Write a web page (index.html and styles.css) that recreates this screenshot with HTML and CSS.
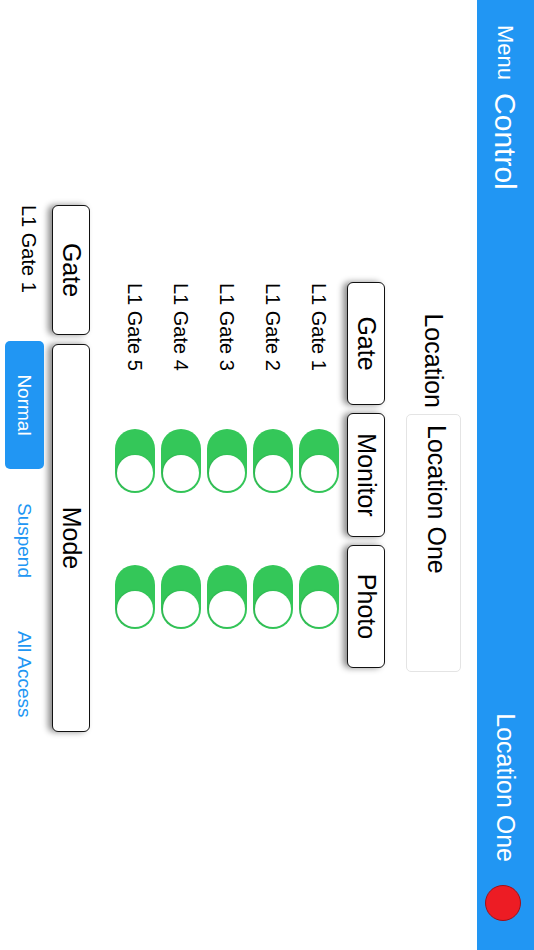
FILE: index.html
```html
<!DOCTYPE html>
<html>
<head>
<meta charset="utf-8">
<link rel="stylesheet" href="styles.css">
</head>
<body>
<div class="viewport">
<div class="stage">
  <header class="topbar">
    <div class="bar-left">
      <span class="menu">Menu</span>
      <span class="title">Control</span>
    </div>
    <div class="bar-right">
      <span class="loc">Location One</span>
      <span class="status-dot"></span>
    </div>
  </header>

  <section class="form">
    <div class="loc-row">
      <label class="loc-label">Location</label>
      <div class="loc-input">Location One</div>
    </div>
    <div class="btn-row">
      <div class="btn btn-gate">Gate</div>
      <div class="btn btn-mon">Monitor</div>
      <div class="btn btn-photo">Photo</div>
    </div>
    <div class="gates">
      <div class="gate-row"><span class="gname">L1 Gate 1</span><span class="toggle"><i></i></span><span class="toggle t2"><i></i></span></div>
      <div class="gate-row"><span class="gname">L1 Gate 2</span><span class="toggle"><i></i></span><span class="toggle t2"><i></i></span></div>
      <div class="gate-row"><span class="gname">L1 Gate 3</span><span class="toggle"><i></i></span><span class="toggle t2"><i></i></span></div>
      <div class="gate-row"><span class="gname">L1 Gate 4</span><span class="toggle"><i></i></span><span class="toggle t2"><i></i></span></div>
      <div class="gate-row"><span class="gname">L1 Gate 5</span><span class="toggle"><i></i></span><span class="toggle t2"><i></i></span></div>
    </div>
  </section>

  <section class="mode">
    <div class="mode-head">
      <div class="btn btn-gate2">Gate</div>
      <div class="btn btn-mode">Mode</div>
    </div>
    <div class="mode-row">
      <span class="mname">L1 Gate 1</span>
      <span class="seg seg-on">Normal</span>
      <span class="seg seg-susp">Suspend</span>
      <span class="seg seg-all">All Access</span>
    </div>
  </section>
</div>
</div>
</body>
</html>
```

FILE: styles.css
```css
html, body {
  margin: 0;
  padding: 0;
  background: #ffffff;
  overflow: hidden;
}
.viewport {
  width: 534px;
  height: 950px;
  overflow: hidden;
  position: relative;
}
.stage {
  position: absolute;
  left: 0;
  top: 0;
  width: 950px;
  height: 534px;
  transform-origin: 0 0;
  transform: translateX(534px) rotate(90deg);
  font-family: "Liberation Sans", Arial, Helvetica, sans-serif;
  color: #000;
  background: #fff;
}
.topbar {
  height: 57px;
  background: #2196f3;
  color: #fff;
  display: flex;
  align-items: center;
  justify-content: space-between;
  padding: 0 29px 0 25px;
  box-sizing: border-box;
}
.bar-left {
  display: flex;
  align-items: center;
  gap: 13px;
}
.menu {
  font-size: 22px;
  line-height: 1;
}
.title {
  font-size: 30px;
  line-height: 1;
}
.bar-right {
  display: flex;
  align-items: center;
  gap: 23px;
}
.loc {
  font-size: 25px;
  line-height: 1;
}
.status-dot {
  width: 34px;
  height: 34px;
  border-radius: 50%;
  background: #ed1c24;
  border: 1px solid #a01018;
  margin-top: 4px;
}

.form {
  padding-left: 282px;
}
.loc-row {
  display: flex;
  align-items: center;
  margin-top: 16px;
  gap: 6px;
}
.loc-label {
  width: 126px;
  text-align: right;
  font-size: 25px;
  line-height: 1;
  margin-top: 0;
}
.loc-input {
  width: 258px;
  height: 55px;
  box-sizing: border-box;
  border: 1px solid #e4e4e4;
  border-radius: 5px;
  padding: 11px 10px 0 10px;
  font-size: 25px;
  line-height: 1;
}
.btn-row {
  display: flex;
  gap: 8px;
  margin-top: 21px;
}
.btn {
  height: 38px;
  box-sizing: border-box;
  border: 1.5px solid #111;
  border-radius: 6px;
  background: #fff;
  box-shadow: 0 4px 6px rgba(0, 0, 0, 0.45);
  font-size: 25px;
  line-height: 35px;
  text-align: center;
}
.btn-gate { width: 123px; }
.btn-mon { width: 124px; }
.btn-photo { width: 123px; }

.gates {
  margin-top: 5px;
}
.gate-row {
  height: 46px;
  display: flex;
  align-items: center;
}
.gname {
  width: 147px;
  padding-left: 1px;
  box-sizing: border-box;
  font-size: 20px;
  line-height: 1;
}
.toggle {
  position: relative;
  width: 64px;
  height: 40px;
  border-radius: 20px;
  background: #34c759;
}
.toggle.t2 {
  margin-left: 72px;
}
.toggle i {
  position: absolute;
  right: 2px;
  top: 2px;
  width: 36px;
  height: 36px;
  border-radius: 50%;
  background: #fff;
  box-shadow: 0 1px 2px rgba(0, 0, 0, 0.12);
}

.mode {
  padding-left: 205px;
}
.mode-head {
  display: flex;
  gap: 9px;
  margin-top: 22px;
}
.btn-gate2 { width: 130px; }
.btn-mode { width: 388px; }
.mode-row {
  display: flex;
  align-items: center;
  margin-top: 8px;
  height: 39px;
}
.mname {
  width: 136px;
  font-size: 20px;
  line-height: 1;
  margin-top: -10px;
}
.seg {
  font-size: 19px;
  line-height: 1;
  color: #2196f3;
}
.seg-on {
  width: 128px;
  height: 39px;
  line-height: 39px;
  text-align: center;
  background: #2196f3;
  color: #fff;
  border-radius: 5px;
}
.seg-susp {
  margin-left: 34px;
}
.seg-all {
  margin-left: 53px;
}
```
